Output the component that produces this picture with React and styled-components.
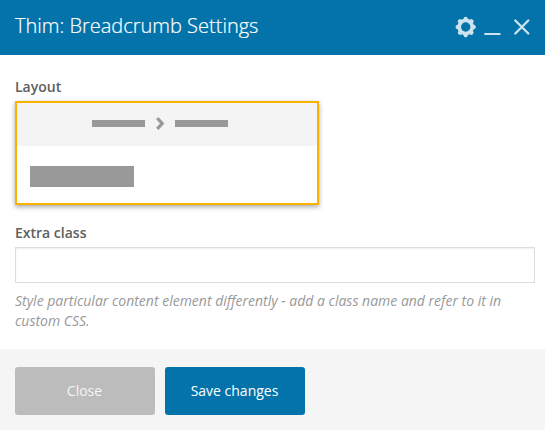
import React from "react";
import styled, { createGlobalStyle } from "styled-components";

const GlobalStyle = createGlobalStyle`
  *, *::before, *::after { box-sizing: border-box; }
  body {
    margin: 0;
    background: #fff;
    font-family: "Open Sans", "Noto Sans", sans-serif;
    overflow: hidden;
  }
`;

const Panel = styled.div`
  display: flex;
  flex-direction: column;
  width: 545px;
  height: 430px;
  background: #fff;
`;

const Header = styled.header`
  display: flex;
  align-items: center;
  justify-content: space-between;
  height: 55px;
  padding: 0 15px 2px;
  background: #0473aa;
`;

const Title = styled.h1`
  margin: 0 0 2px;
  font-size: 20px;
  font-weight: 300;
  line-height: 28px;
  color: #fff;
  -webkit-text-stroke: 0.2px #fff;
  white-space: nowrap;
`;

const Controls = styled.div`
  display: flex;
  align-items: center;
`;

const IconButton = styled.button`
  display: flex;
  width: ${({ $width }) => $width}px;
  height: 22px;
  margin: 0 0 0 ${({ $gap }) => $gap}px;
  padding: 0;
  border: 0;
  background: none;
  color: #cde3ee;

  svg { display: block; }
`;

const Body = styled.main`
  flex: 1;
  padding: 22px 10px 0 15px;
`;

const Label = styled.label`
  display: block;
  font-size: 14px;
  font-weight: 600;
  line-height: 20px;
  color: #606060;
`;

const LayoutCard = styled.div`
  width: 304px;
  height: 104px;
  margin: 4px 0 18px;
  border: 2px solid #f8b300;
  background: #fff;
  box-shadow: 0 2px 5px rgba(0, 0, 0, 0.35);
`;

const CrumbStrip = styled.div`
  display: flex;
  align-items: center;
  gap: 11px;
  height: 43px;
  padding: 0 0 2px 75px;
  background: #f4f4f4;

  svg { display: block; }
`;

const CrumbBar = styled.span`
  width: 53px;
  height: 7px;
  background: #999;
`;

const HeadingBlock = styled.div`
  width: 104px;
  height: 21px;
  margin: 20px 0 0 13px;
  background: #999;
`;

const TextInput = styled.input`
  display: block;
  width: 520px;
  height: 36px;
  margin-top: 4px;
  padding: 0 8px;
  border: 1px solid #ddd;
  border-radius: 0;
  background: #fff;
  box-shadow: inset 0 1px 2px rgba(0, 0, 0, 0.07);
  font: inherit;
  outline: none;
`;

const Hint = styled.p`
  margin: 8px 0 0;
  width: 510px;
  font-size: 14px;
  font-style: italic;
  line-height: 20px;
  color: #999;
`;

const Footer = styled.footer`
  display: flex;
  gap: 10px;
  height: 81px;
  padding: 18px 15px;
  background: #f5f5f5;
`;

const ActionButton = styled.button`
  width: 140px;
  height: 48px;
  padding: 0 1px 0 0;
  border: 0;
  border-radius: 3px;
  background: ${({ $primary }) => ($primary ? "#0473aa" : "#bcbcbc")};
  color: ${({ $primary }) => ($primary ? "#fff" : "#f5f5f5")};
  font-family: inherit;
  font-size: 14px;
  line-height: 20px;
`;

const teeth = Array.from({ length: 8 }, (_, i) => i * 45);

function GearIcon() {
  return (
    <svg width="22" height="22" viewBox="-10.7 -11 22 22" fill="currentColor">
      <circle r="6.5" fill="none" stroke="currentColor" strokeWidth="3.6" />
      {teeth.map((angle) => (
        <path key={angle} transform={`rotate(${angle})`} d="M-2.8-7 L-1.5-9.7 Q0-10.7 1.5-9.7 L2.8-7Z" />
      ))}
    </svg>
  );
}

function MinimizeIcon() {
  return (
    <svg width="17" height="22" viewBox="0 0 17 22">
      <path d="M.3 18h16.2" stroke="currentColor" strokeWidth="2" />
    </svg>
  );
}

function CloseIcon() {
  return (
    <svg width="16" height="22" viewBox="0 0 16 22">
      <path d="M1.3 4.5l13 13M14.3 4.5l-13 13" stroke="currentColor" strokeWidth="2.3" strokeLinecap="round" />
    </svg>
  );
}

function ChevronIcon() {
  return (
    <svg width="8" height="13" viewBox="0 0 8 13">
      <path d="M1.2 1.2L6.2 6.5 1.2 11.8" fill="none" stroke="#999" strokeWidth="3.2" />
    </svg>
  );
}

export default function App() {
  return (
    <>
      <GlobalStyle />
      <Panel>
        <Header>
          <Title>Thim: Breadcrumb Settings</Title>
          <Controls>
            <IconButton $width={22} $gap={0} aria-label="Settings"><GearIcon /></IconButton>
            <IconButton $width={17} $gap={7} aria-label="Minimize"><MinimizeIcon /></IconButton>
            <IconButton $width={16} $gap={13} aria-label="Close"><CloseIcon /></IconButton>
          </Controls>
        </Header>
        <Body>
          <Label as="div">Layout</Label>
          <LayoutCard>
            <CrumbStrip>
              <CrumbBar />
              <ChevronIcon />
              <CrumbBar />
            </CrumbStrip>
            <HeadingBlock />
          </LayoutCard>
          <Label htmlFor="extra-class">Extra class</Label>
          <TextInput id="extra-class" type="text" />
          <Hint>
            Style particular content element differently - add a class name and refer to it in custom CSS.
          </Hint>
        </Body>
        <Footer>
          <ActionButton type="button">Close</ActionButton>
          <ActionButton type="button" $primary>Save changes</ActionButton>
        </Footer>
      </Panel>
    </>
  );
}
